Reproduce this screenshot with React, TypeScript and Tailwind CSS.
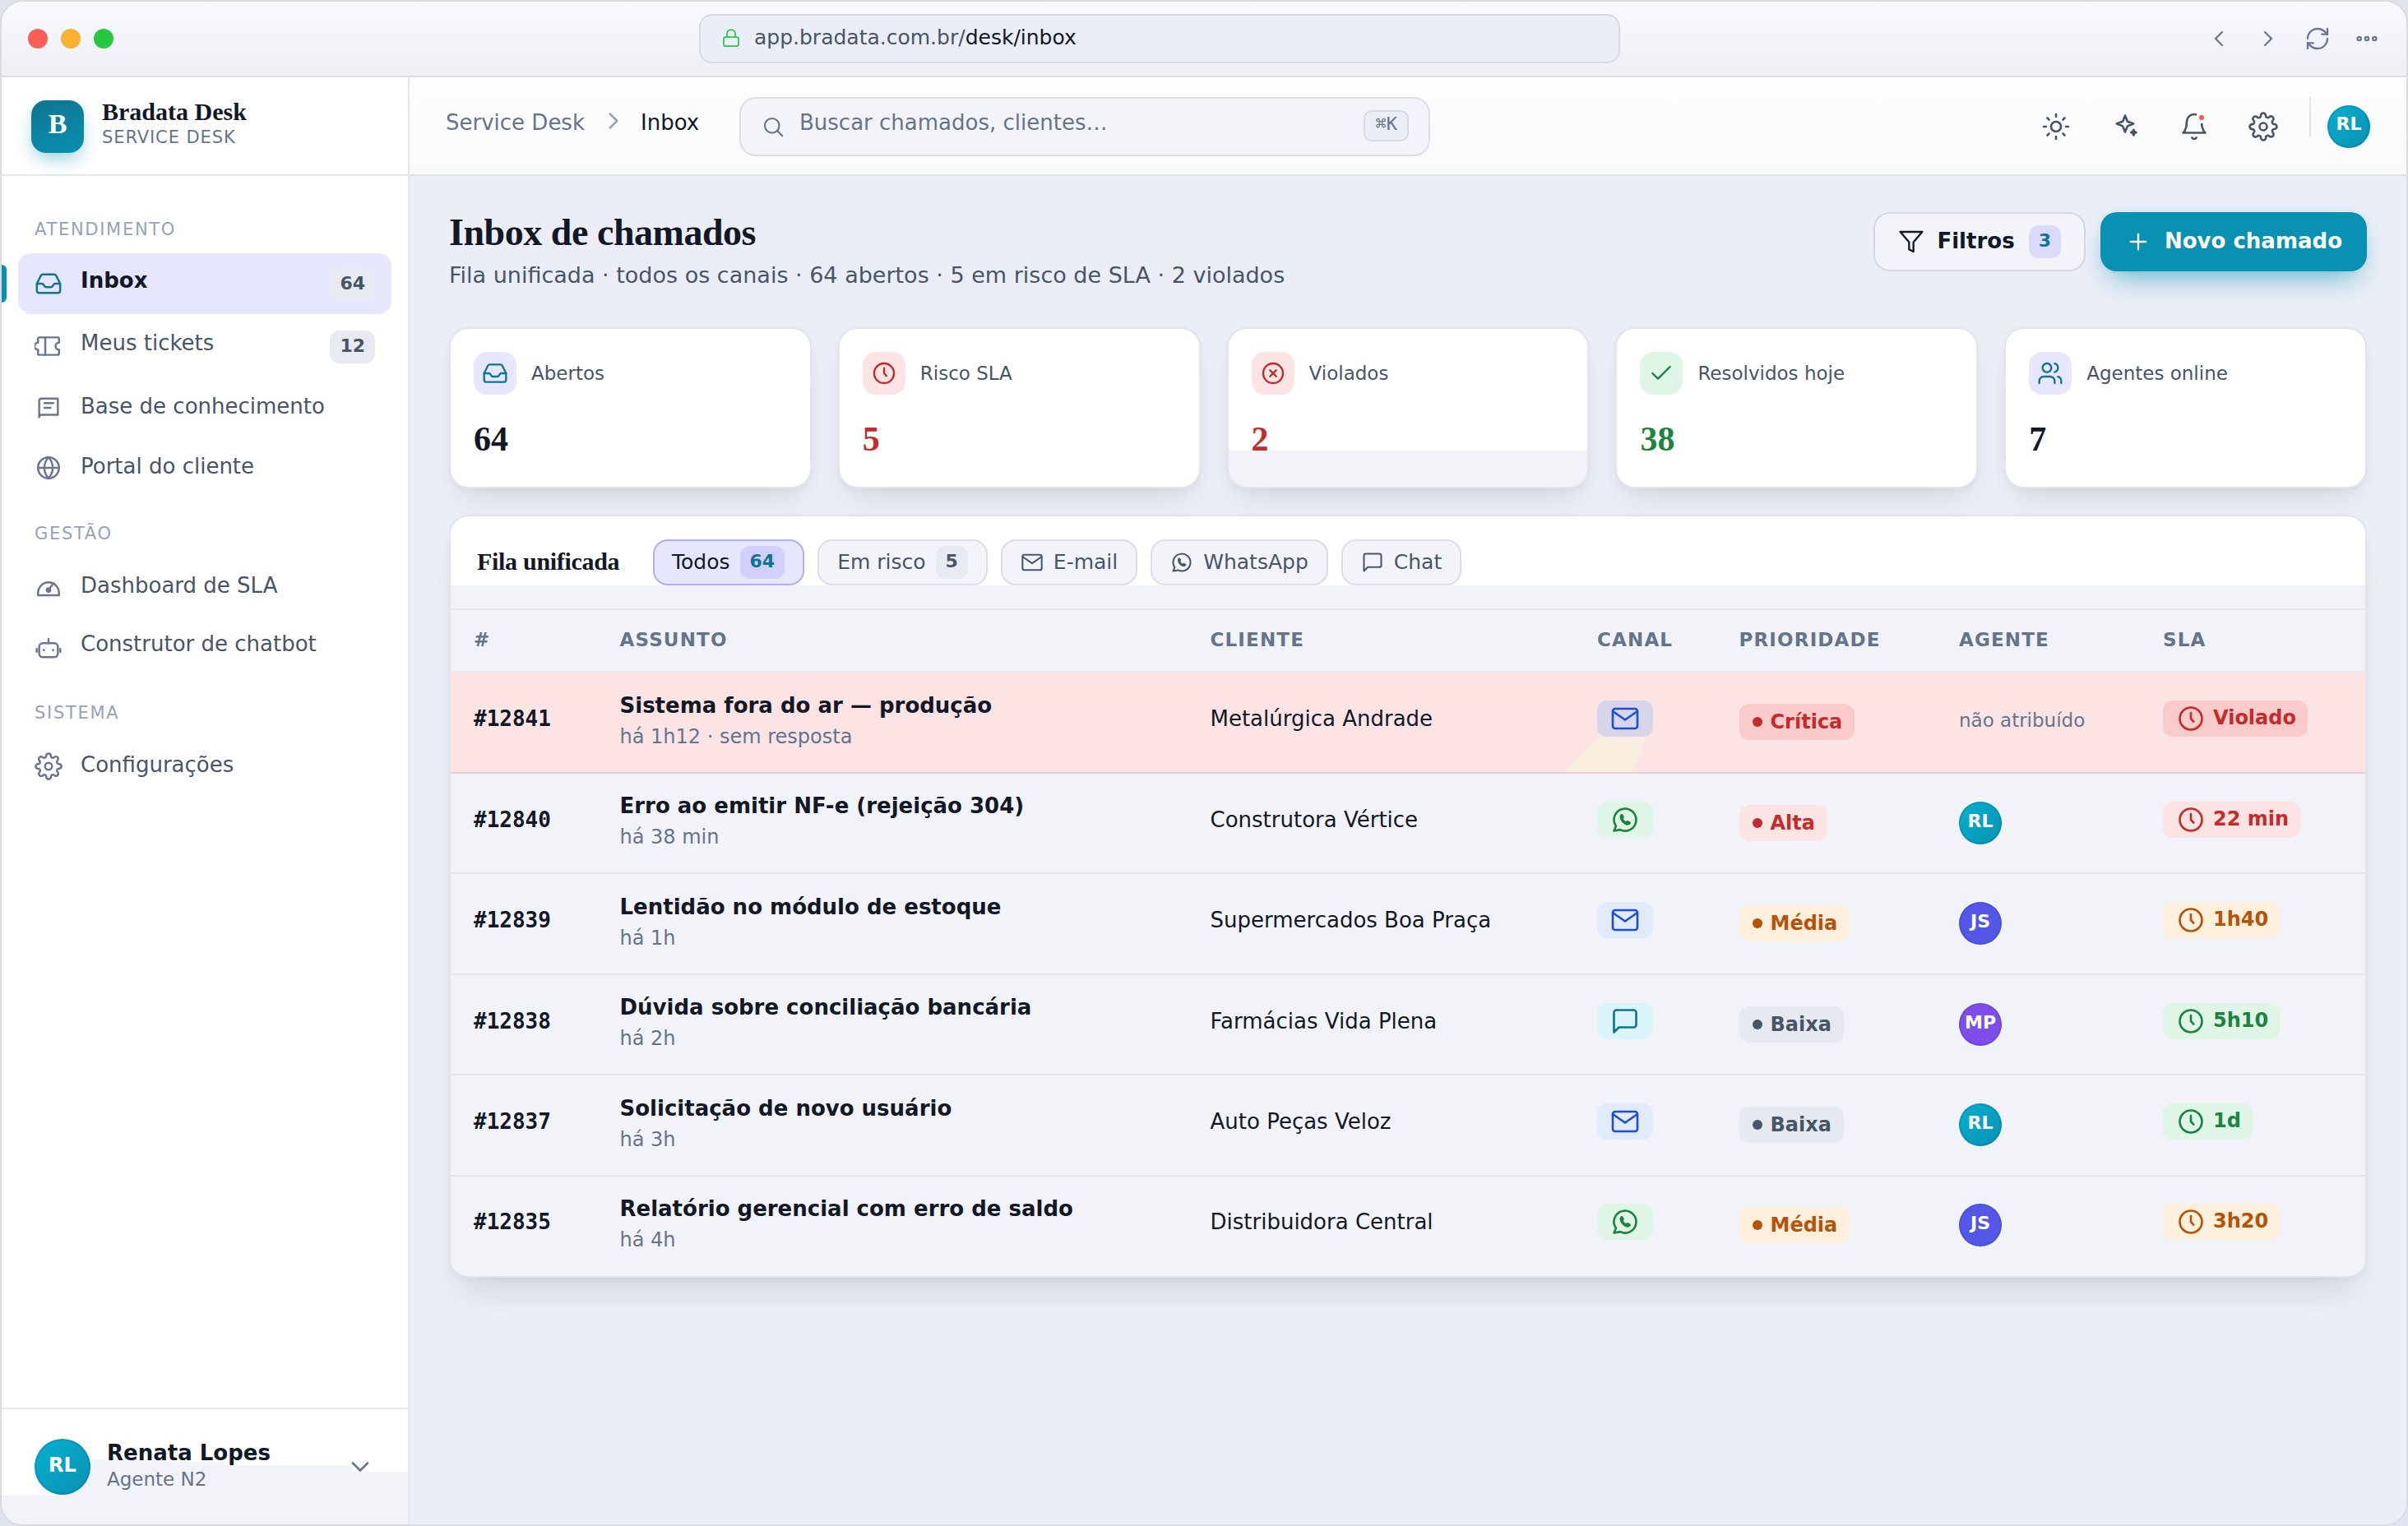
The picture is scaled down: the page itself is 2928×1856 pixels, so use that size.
import React from "react";

const PATHS = {
  inbox: (
    <>
      <path d="M2 12h4.2c.8 0 1.200.3 1.600 1l.6 1c.4.7.8 1 1.600 1h4c.8 0 1.200-.3 1.600-1l.6-1c.4-.7.8-1 1.600-1H22" />
      <path d="M5.450 5.110 2 12v6a2 2 0 0 0 2 2h16a2 2 0 0 0 2-2v-6l-3.450-6.890A2 2 0 0 0 16.760 4H7.240a2 2 0 0 0-1.790 1.110z" />
    </>
  ),
  ticket: (
    <>
      <path d="M3 9V5.500a1 1 0 0 1 1-1h16a1 1 0 0 1 1 1V9a3 3 0 0 0 0 6v3.500a1 1 0 0 1-1 1H4a1 1 0 0 1-1-1V15a3 3 0 0 1 0-6z" />
      <path d="M9.200 4.500v15" />
    </>
  ),
  note: (
    <>
      <path d="M4 20V6a2 2 0 0 1 2-2h14v14H6a2 2 0 0 0-2 2z" />
      <path d="M8.500 8h7.600M8.500 12h5.300" />
    </>
  ),
  globe: (
    <>
      <circle cx="12" cy="12" r="9" />
      <path d="M3 12h18" />
      <path d="M12 3c2.400 2.600 3.600 5.600 3.600 9s-1.200 6.400-3.600 9c-2.400-2.600-3.600-5.600-3.600-9S9.600 5.600 12 3z" />
    </>
  ),
  gauge: (
    <>
      <path d="M3 19v-2a9 9 0 0 1 18 0v2z" />
      <path d="M12 14.500l4.200-5.600" />
      <circle cx="12" cy="14.500" r="1.500" fill="currentColor" />
    </>
  ),
  bot: (
    <>
      <rect x="4" y="8.700" width="16" height="12" rx="3" />
      <path d="M12 4.900v3.800M1.900 13.600v2.400M22.100 13.600v2.400" />
      <circle cx="8" cy="14.600" r=".5" fill="currentColor" strokeWidth="1" />
      <circle cx="16" cy="14.600" r=".5" fill="currentColor" strokeWidth="1" />
    </>
  ),
  gear: (
    <>
      <circle cx="12" cy="12" r="3" />
      <path d="M19.400 15a1.650 1.650 0 0 0 .33 1.820l.06.06a2 2 0 0 1 0 2.830 2 2 0 0 1-2.830 0l-.06-.06a1.650 1.650 0 0 0-1.820-.33 1.650 1.650 0 0 0-1 1.510V21a2 2 0 0 1-2 2 2 2 0 0 1-2-2v-.09A1.650 1.650 0 0 0 9 19.400a1.650 1.650 0 0 0-1.820.33l-.06.06a2 2 0 0 1-2.830 0 2 2 0 0 1 0-2.830l.06-.06a1.650 1.650 0 0 0 .33-1.820 1.650 1.650 0 0 0-1.510-1H3a2 2 0 0 1-2-2 2 2 0 0 1 2-2h.09A1.650 1.650 0 0 0 4.600 9a1.650 1.650 0 0 0-.33-1.820l-.06-.06a2 2 0 0 1 0-2.830 2 2 0 0 1 2.830 0l.06.06a1.650 1.650 0 0 0 1.820.33H9a1.650 1.650 0 0 0 1-1.510V3a2 2 0 0 1 2-2 2 2 0 0 1 2 2v.09a1.650 1.650 0 0 0 1 1.510 1.650 1.650 0 0 0 1.820-.33l.06-.06a2 2 0 0 1 2.830 0 2 2 0 0 1 0 2.830l-.06.06a1.650 1.650 0 0 0-.33 1.820V9a1.650 1.650 0 0 0 1.510 1H21a2 2 0 0 1 2 2 2 2 0 0 1-2 2h-.09a1.650 1.650 0 0 0-1.510 1z" />
    </>
  ),
  lock: (
    <>
      <rect x="3" y="11" width="18" height="11" rx="2" />
      <path d="M7 11V7a5 5 0 0 1 10 0v4" />
    </>
  ),
  left: <path d="m15 18-6-6 6-6" />,
  right: <path d="m9 18 6-6-6-6" />,
  down: <path d="m6 9 6 6 6-6" />,
  refresh: (
    <>
      <path d="M3 12a9 9 0 0 1 9-9 9.750 9.750 0 0 1 6.740 2.740L21 8" />
      <path d="M21 3v5h-5" />
      <path d="M21 12a9 9 0 0 1-9 9 9.750 9.750 0 0 1-6.740-2.740L3 16" />
      <path d="M8 16H3v5" />
    </>
  ),
  dots: (
    <>
      <circle cx="5" cy="12" r="1.600" />
      <circle cx="12" cy="12" r="1.600" />
      <circle cx="19" cy="12" r="1.600" />
    </>
  ),
  search: (
    <>
      <circle cx="11" cy="11" r="7" />
      <path d="m21 21-4.800-4.800" />
    </>
  ),
  sun: (
    <>
      <circle cx="12" cy="12" r="4" />
      <path d="M12 2v2M12 20v2M4.930 4.930l1.410 1.410M17.660 17.660l1.410 1.410M2 12h2M20 12h2M6.340 17.660l-1.410 1.410M19.070 4.930l-1.410 1.410" />
    </>
  ),
  sparkles: (
    <>
      <path d="M12 3l1.900 4.800 4.900 1.900-4.900 1.900L12 16.400l-1.900-4.800-4.900-1.900 4.900-1.900z" />
      <path d="M18.900 14.500l.7 1.600 1.400.6-1.400.6-.7 1.600-.7-1.600-1.400-.6 1.400-.6z" fill="currentColor" />
    </>
  ),
  bell: (
    <>
      <path d="M18 8A6 6 0 0 0 6 8c0 7-3 9-3 9h18s-3-2-3-9" />
      <path d="M13.730 21a2 2 0 0 1-3.460 0" />
    </>
  ),
  filter: <path d="M22 3H2l8 9.460V19l4 2v-8.540z" />,
  plus: <path d="M12 5v14M5 12h14" />,
  clock: (
    <>
      <circle cx="12" cy="12" r="9" />
      <path d="M12 7.300V12l2.200 2.400" />
    </>
  ),
  xcircle: (
    <>
      <circle cx="12" cy="12" r="9" />
      <path d="m9.200 9.200 5.600 5.600M14.800 9.200l-5.600 5.600" />
    </>
  ),
  check: <path d="M20 6 9 17l-5-5" />,
  users: (
    <>
      <path d="M16 21v-2a4 4 0 0 0-4-4H6a4 4 0 0 0-4 4v2" />
      <circle cx="9" cy="7" r="4" />
      <path d="M22 21v-2a4 4 0 0 0-3-3.870M16 3.130a4 4 0 0 1 0 7.750" />
    </>
  ),
  mail: (
    <>
      <rect x="2" y="4" width="20" height="16" rx="2" />
      <path d="m22 6-10 7L2 6" />
    </>
  ),
  whatsapp: (
    <>
      <path d="m3 21 1.650-3.800a9 9 0 1 1 3.400 2.900z" />
      <path
        stroke="none"
        fill="currentColor"
        d="M8.400 7.600c.5-.5 1.400-.4 1.800.2l.9 1.600c.2.4.1.9-.2 1.200l-.4.4c.5 1.100 1.300 1.900 2.400 2.400l.4-.4c.3-.3.8-.4 1.200-.2l1.600.9c.6.4.7 1.300.2 1.800-1 1-2.400 1.200-3.800.6-1.900-.8-3.500-2.400-4.300-4.400-.6-1.400-.7-3.100.2-4.100z"
      />
    </>
  ),
  chat: <path d="M21 15a2 2 0 0 1-2 2H7l-4 4V5a2 2 0 0 1 2-2h14a2 2 0 0 1 2 2z" />,
};
type IconName = keyof typeof PATHS;

function Icon({ name, className }: { name: IconName; className: string }) {
  return (
    <svg
      viewBox="0 0 24 24"
      fill="none"
      stroke="currentColor"
      strokeWidth="1.75"
      strokeLinecap="round"
      strokeLinejoin="round"
      className={`shrink-0 ${className}`}
    >
      {PATHS[name]}
    </svg>
  );
}

const AVATAR: Record<string, string> = {
  RL: "bg-linear-135 from-[#06b0d0] to-[#0892b3]",
  JS: "bg-[#5456e8]",
  MP: "bg-[#7f4deb]",
};

function Avatar({ who, className = "size-[52px] pb-[5px] text-[22px]" }: { who: string; className?: string }) {
  return (
    <div
      className={`flex shrink-0 items-center justify-center rounded-full font-bold text-white shadow-[inset_0_0_0_2px_rgba(8,60,120,0.16)] ${AVATAR[who]} ${className}`}
    >
      {who}
    </div>
  );
}

function Count({ children, className }: { children: React.ReactNode; className: string }) {
  return (
    <span className={`flex h-10 items-center justify-center rounded-xl px-3 pb-[3px] text-[22px] leading-none font-bold ${className}`}>
      {children}
    </span>
  );
}

function TitleBar() {
  return (
    <div className="flex h-[92px] shrink-0 items-center justify-between border-b-2 border-[#dcdee5] bg-linear-to-b from-[#f9fafe] to-[#edeff5] px-8">
      <div className="flex w-[816px] gap-4">
        <span className="size-6 rounded-full bg-[#fc5f55]" />
        <span className="size-6 rounded-full bg-[#f9b12f]" />
        <span className="size-6 rounded-full bg-[#28c740]" />
      </div>
      <div className="flex h-[60px] w-[1120px] items-center gap-4 rounded-2xl border-2 border-[#d7dae1] bg-[#ebeef6] pl-[25px] text-[25px] text-[#475569]">
        <Icon name="lock" className="mb-0.5 size-6 text-[#28c555]" />
        <span className="pb-[3px]">
          app.bradata.com.br/<span className="text-[#131826]">desk/inbox</span>
        </span>
      </div>
      <div className="flex w-[924px] justify-end gap-7 text-[#6b7690]">
        <Icon name="left" className="size-8" />
        <Icon name="right" className="size-8" />
        <Icon name="refresh" className="size-8" />
        <Icon name="dots" className="size-8" />
      </div>
    </div>
  );
}

function NavLabel({ children }: { children: React.ReactNode }) {
  return (
    <div className="flex h-[74px] items-center pt-[18px] pl-5 text-[21px] tracking-[1.7px] text-[#94a3b8]">{children}</div>
  );
}

function NavItem({ icon, label, count, active, low }: { icon: IconName; label: string; count?: number; active?: boolean; low?: boolean }) {
  return (
    <div
      className={`relative flex items-center gap-[22px] rounded-2xl px-5 text-[26px] ${count ? "h-[74px]" : "h-[71px]"} ${
        active ? "bg-[#e6e6fe] font-bold text-[#131826]" : "text-[#475569]"
      }`}
    >
      {active && <span className="absolute top-[14px] -left-5 h-[46px] w-1.5 rounded-r-md bg-[#0891b2]" />}
      <Icon name={icon} className={`size-[34px] ${active ? "text-[#0e7490]" : "text-[#6b7690]"}`} />
      <span className={`flex-1 ${count ? "pb-2" : low ? "pb-[7px]" : "pb-[3px]"}`}>{label}</span>
      {count && <Count className="mt-0.5 min-w-[54px] bg-[#e7eaf1] text-[#475569]">{count}</Count>}
    </div>
  );
}

function Sidebar() {
  return (
    <aside className="flex w-[496px] shrink-0 flex-col border-r-2 border-[#e4e6eb] bg-white">
      <div className="flex h-[120px] items-center gap-[22px] border-b-2 border-[#e6e7ea] pt-0.5 pl-9">
        <div className="flex size-16 items-center justify-center rounded-[18px] bg-linear-160 from-[#0e7490] to-[#0891b2] pb-[7px] font-['Liberation_Serif',serif] text-[34px] font-bold text-white shadow-[0_10px_22px_-4px_rgba(8,145,178,0.45)]">
          B
        </div>
        <div className="pb-2">
          <div className="font-['Liberation_Serif',serif] text-[30px] leading-[34px] font-bold text-[#131826]">Bradata Desk</div>
          <div className="text-[21px] leading-7 tracking-[0.9px] text-[#64748b]">SERVICE DESK</div>
        </div>
      </div>
      <nav className="flex flex-1 flex-col px-5 pt-5">
        <NavLabel>ATENDIMENTO</NavLabel>
        <div className="flex flex-col gap-0.5">
          <NavItem icon="inbox" label="Inbox" count={64} active />
          <NavItem icon="ticket" label="Meus tickets" count={12} />
          <NavItem icon="note" label="Base de conhecimento" />
          <NavItem icon="globe" label="Portal do cliente" />
        </div>
        <NavLabel>GESTÃO</NavLabel>
        <div className="flex flex-col gap-0.5">
          <NavItem icon="gauge" label="Dashboard de SLA" />
          <NavItem icon="bot" label="Construtor de chatbot" low />
        </div>
        <NavLabel>SISTEMA</NavLabel>
        <NavItem icon="gear" label="Configurações" />
      </nav>
      <div className="relative flex h-[142px] items-center gap-5 border-t-2 border-[#e6e7ea] pr-10 pl-10">
        <div className="absolute inset-0 bg-[#f2f3f8] [clip-path:polygon(0_105px,80px_105px,106px_61px,200px_61px,200px_64px,270px_64px,270px_68px,426px_68px,426px_76px,100%_76px,100%_100%,0_100%)]" />
        <Avatar who="RL" className="relative size-[68px] pb-[5px] text-[24px]" />
        <div className="relative flex-1 pb-[3px]">
          <div className="text-[26px] leading-8 font-bold text-[#131826]">Renata Lopes</div>
          <div className="text-[23px] leading-8 text-[#64748b]">Agente N2</div>
        </div>
        <Icon name="down" className="relative size-9 text-[#6b7690]" />
      </div>
    </aside>
  );
}

function Header() {
  return (
    <header className="flex h-[120px] shrink-0 items-center border-b-2 border-[#dfe1e7] bg-linear-to-b from-[#fdfdfe] to-[#f9fafc] px-11 pt-0.5 text-[26px]">
      <span className="pb-[9px] text-[#64748b]">Service Desk</span>
      <Icon name="right" className="mr-4 mb-[15px] ml-[18px] size-[34px] text-[#94a3b8]" />
      <span className="w-[120px] pb-[9px] text-[#131826]">Inbox</span>
      <div className="flex h-[72px] w-[840px] items-center rounded-[20px] border-2 border-[#dcdee6] bg-[#f3f4fa] px-6 text-[#64748b]">
        <Icon name="search" className="size-[30px]" />
        <span className="flex-1 pb-[9px] pl-[17px]">Buscar chamados, clientes…</span>
        <span className="mb-0.5 flex h-[38px] items-center rounded-[10px] border-2 border-[#d7dae2] bg-[#ebeef6] px-3 pb-[5px] font-['DejaVu_Sans_Mono',monospace] text-[22px] leading-none">
          ⌘K
        </span>
      </div>
      <div className="ml-auto flex items-center text-[#475569]">
        <div className="flex gap-12">
          <Icon name="sun" className="size-9" />
          <Icon name="sparkles" className="size-9" />
          <div className="relative">
            <Icon name="bell" className="size-9" />
            <span className="absolute top-0 right-0.5 size-[14px] rounded-full border-4 border-[#fcfcfe] bg-[#fa5a4b]" />
          </div>
          <Icon name="gear" className="size-9" />
        </div>
        <span className="mr-5 mb-6 ml-[38px] h-12 w-0.5 bg-[#dfe1e7]" />
        <Avatar who="RL" className="size-[52px] pb-[7px] text-[22px]" />
      </div>
    </header>
  );
}

const STATS: { icon: IconName; tile: string; label: string; value: number; color: string; split?: boolean }[] = [
  { icon: "inbox", tile: "bg-[#e6e6fe] text-[#0e7490]", label: "Abertos", value: 64, color: "text-[#131826]" },
  { icon: "clock", tile: "bg-[#fde4e4] text-[#c02626]", label: "Risco SLA", value: 5, color: "text-[#c42b2b]" },
  { icon: "xcircle", tile: "bg-[#fde4e4] text-[#c02626]", label: "Violados", value: 2, color: "text-[#c42b2b]", split: true },
  { icon: "check", tile: "bg-[#dff6e6] text-[#15803d]", label: "Resolvidos hoje", value: 38, color: "text-[#1c8440]" },
  { icon: "users", tile: "bg-[#e6e6fe] text-[#0e7490]", label: "Agentes online", value: 7, color: "text-[#131826]" },
];

function Stats() {
  return (
    <div className="mt-[46px] grid grid-cols-5 gap-8">
      {STATS.map((s) => (
        <div
          key={s.label}
          className={`h-[196px] rounded-3xl border-2 border-[#e4e5ea] p-7 shadow-[0_2px_6px_rgba(15,23,42,0.04),0_20px_36px_-14px_rgba(20,20,25,0.13)] ${
            s.split ? "bg-linear-to-b from-white from-[148px] to-[#f2f3f8] to-[148px]" : "bg-white"
          }`}
        >
          <div className="flex items-center gap-[18px]">
            <div className={`flex size-[52px] items-center justify-center rounded-2xl ${s.tile}`}>
              <Icon name={s.icon} className="size-8" />
            </div>
            <span className="text-[23px] text-[#475569]">{s.label}</span>
          </div>
          <div className={`mt-[30px] font-['Liberation_Serif',serif] text-[42px] leading-[48px] font-bold ${s.color}`}>{s.value}</div>
        </div>
      ))}
    </div>
  );
}

function Chip({ icon, label, count, active }: { icon?: IconName; label: string; count?: number; active?: boolean }) {
  return (
    <div
      className={`flex h-14 items-center gap-3 rounded-[18px] border-2 text-[25px] ${
        active
          ? "border-[#aeaff7] bg-[#e6e6fe] pr-[22px] pl-[21px] text-[#131826]"
          : "border-[#dcdee6] bg-[#f3f4fa] px-[22px] text-[#475569]"
      }`}
    >
      {icon && <Icon name={icon} className="size-7" />}
      <span>{label}</span>
      {count && <Count className={active ? "bg-[#d0d0fa] text-[#0e7490]" : "bg-[#e7eaf1] text-[#475569]"}>{count}</Count>}
    </div>
  );
}

const RED = "bg-[#fde4e4] text-[#c42b2b]";
const DEEP_RED = "bg-[#f9cbcb] text-[#c42b2b]";
const AMBER = "bg-[#fef0dc] text-[#b45309]";
const GREEN = "bg-[#dff6e6] text-[#1c8440]";
const GRAY = "bg-[#e6eaf0] text-[#475569]";
const MAIL = "bg-[#e2ebfd] text-[#1d4ed8]";
const CHAT = "bg-[#dbf5fb] text-[#0e7490]";

const TICKETS: {
  id: string; title: string; sub: string; client: string; channel: IconName; channelTone: string;
  priority: string; tone: string; agent?: string; sla: string; slaTone: string; late?: boolean;
}[] = [
  { id: "#12841", title: "Sistema fora do ar — produção", sub: "há 1h12 · sem resposta", client: "Metalúrgica Andrade", channel: "mail", channelTone: "bg-[#d6d5ea] text-[#1d4ed8]", priority: "Crítica", tone: DEEP_RED, sla: "Violado", slaTone: DEEP_RED, late: true },
  { id: "#12840", title: "Erro ao emitir NF-e (rejeição 304)", sub: "há 38 min", client: "Construtora Vértice", channel: "whatsapp", channelTone: GREEN, priority: "Alta", tone: RED, agent: "RL", sla: "22 min", slaTone: RED },
  { id: "#12839", title: "Lentidão no módulo de estoque", sub: "há 1h", client: "Supermercados Boa Praça", channel: "mail", channelTone: MAIL, priority: "Média", tone: AMBER, agent: "JS", sla: "1h40", slaTone: AMBER },
  { id: "#12838", title: "Dúvida sobre conciliação bancária", sub: "há 2h", client: "Farmácias Vida Plena", channel: "chat", channelTone: CHAT, priority: "Baixa", tone: GRAY, agent: "MP", sla: "5h10", slaTone: GREEN },
  { id: "#12837", title: "Solicitação de novo usuário", sub: "há 3h", client: "Auto Peças Veloz", channel: "mail", channelTone: MAIL, priority: "Baixa", tone: GRAY, agent: "RL", sla: "1d", slaTone: GREEN },
  { id: "#12835", title: "Relatório gerencial com erro de saldo", sub: "há 4h", client: "Distribuidora Central", channel: "whatsapp", channelTone: GREEN, priority: "Média", tone: AMBER, agent: "JS", sla: "3h20", slaTone: AMBER },
];

const GRID = "grid grid-cols-[177.5px_718px_470.5px_172.5px_267.5px_248px_1fr] items-center pl-7";

function Queue() {
  return (
    <section className="mt-8 overflow-hidden rounded-3xl border-2 border-[#e3e4e9] bg-[#f2f3f9] shadow-[0_2px_6px_rgba(15,23,42,0.04),0_28px_44px_-18px_rgba(20,20,25,0.14)]">
      <div className="flex h-[114px] items-center gap-4 border-b-2 border-[#e4e6ec] bg-linear-to-b from-white from-[84px] to-[#f2f3f9] to-[84px] pl-8">
        <h2 className="mr-[-16px] w-[214px] pb-1 font-['Liberation_Serif',serif] text-[30px] font-bold tracking-[-0.3px] text-[#131826]">
          Fila unificada
        </h2>
        <Chip label="Todos" count={64} active />
        <Chip label="Em risco" count={5} />
        <Chip icon="mail" label="E-mail" />
        <Chip icon="whatsapp" label="WhatsApp" />
        <Chip icon="chat" label="Chat" />
      </div>
      <div className={`${GRID} h-[76px] border-b-2 border-[#e6e9f0] pb-0.5 text-[23px] font-bold tracking-[1.150px] text-[#64748b]`}>
        {["#", "ASSUNTO", "CLIENTE", "CANAL", "PRIORIDADE", "AGENTE", "SLA"].map((h) => (
          <span key={h}>{h}</span>
        ))}
      </div>
      {TICKETS.map((t, i) => (
        <div
          key={t.id}
          className={`${GRID} relative border-b-2 text-[26px] text-[#131826] ${i === 5 ? "h-[121.5px]" : "h-[122.5px]"} ${
            t.late ? "border-[#ecced1] bg-[#fde4e4]" : i === 5 ? "border-transparent" : "border-[#e4e6ec]"
          }`}
        >
          {t.late && (
            <div className="absolute bottom-0 left-[1354px] h-12 w-[102px] bg-[#f9eddf] [clip-path:polygon(48px_0,102px_0,83px_100%,0_100%)]" />
          )}
          <span className="pb-[7px] font-['DejaVu_Sans_Mono',monospace] font-bold">{t.id}</span>
          <div className="pb-[3px]">
            <div className="leading-[38px] font-bold">{t.title}</div>
            <div className="text-[24px] leading-[38px] text-[#64748b]">{t.sub}</div>
          </div>
          <span className="pb-[7px]">{t.client}</span>
          <div className="relative pb-2">
            <div className={`flex h-11 w-[68px] items-center justify-center rounded-xl ${t.channelTone}`}>
              <Icon name={t.channel} className="size-9" />
            </div>
          </div>
          <div className={`flex h-11 w-fit items-center gap-[10px] rounded-xl pr-[15px] pl-4 text-[24px] leading-none font-bold ${t.tone}`}>
            <span className="size-3 rounded-full bg-current" />
            <span>{t.priority}</span>
          </div>
          {t.agent ? <Avatar who={t.agent} /> : <span className="pb-1 text-[23px] text-[#64748b]">não atribuído</span>}
          <div className="pb-2">
            <div className={`flex h-11 w-fit items-center gap-[9px] rounded-xl pr-[14px] pl-4 text-[24px] leading-none font-bold ${t.slaTone}`}>
              <Icon name="clock" className="size-9" />
              <span className="pb-0.5">{t.sla}</span>
            </div>
          </div>
        </div>
      ))}
    </section>
  );
}

export default function App() {
  return (
    <div className="h-[1856px] w-[2928px] bg-[#dfe4ee] font-['DejaVu_Sans',sans-serif]">
      <div className="flex h-full flex-col overflow-hidden rounded-[28px] border-2 border-[#d9dbe1] bg-[#ebeef6]">
        <TitleBar />
        <div className="flex min-h-0 flex-1">
          <Sidebar />
          <div className="flex min-w-0 flex-1 flex-col">
            <Header />
            <main className="px-12 pt-11">
              <div className="flex items-start justify-between">
                <div>
                  <h1 className="font-['Liberation_Serif',serif] text-[46px] leading-[50px] font-bold tracking-[-0.460px] text-[#131826]">
                    Inbox de chamados
                  </h1>
                  <p className="mt-[10px] text-[27px] leading-[34px] text-[#475569]">
                    Fila unificada · todos os canais · 64 abertos · 5 em risco de SLA · 2 violados
                  </p>
                </div>
                <div className="flex gap-[18px] text-[26px] font-bold">
                  <div className="flex h-[72px] items-center rounded-[20px] border-2 border-[#d5d8de] bg-[#f3f4fa] px-7 text-[#131826]">
                    <Icon name="filter" className="size-8" />
                    <span className="pr-[17px] pb-0.5 pl-[15px]">Filtros</span>
                    <Count className="bg-[#dadbfb] pb-0 text-[#0e7490]">3</Count>
                  </div>
                  <div className="flex h-[72px] items-center gap-4 rounded-[20px] bg-[#0891b2] px-[30px] text-white shadow-[0_18px_34px_-12px_rgba(8,145,178,0.6),0_0_14px_rgba(8,145,178,0.08)]">
                    <Icon name="plus" className="size-8" />
                    <span className="pb-0.5">Novo chamado</span>
                  </div>
                </div>
              </div>
              <Stats />
              <Queue />
            </main>
          </div>
        </div>
      </div>
    </div>
  );
}
